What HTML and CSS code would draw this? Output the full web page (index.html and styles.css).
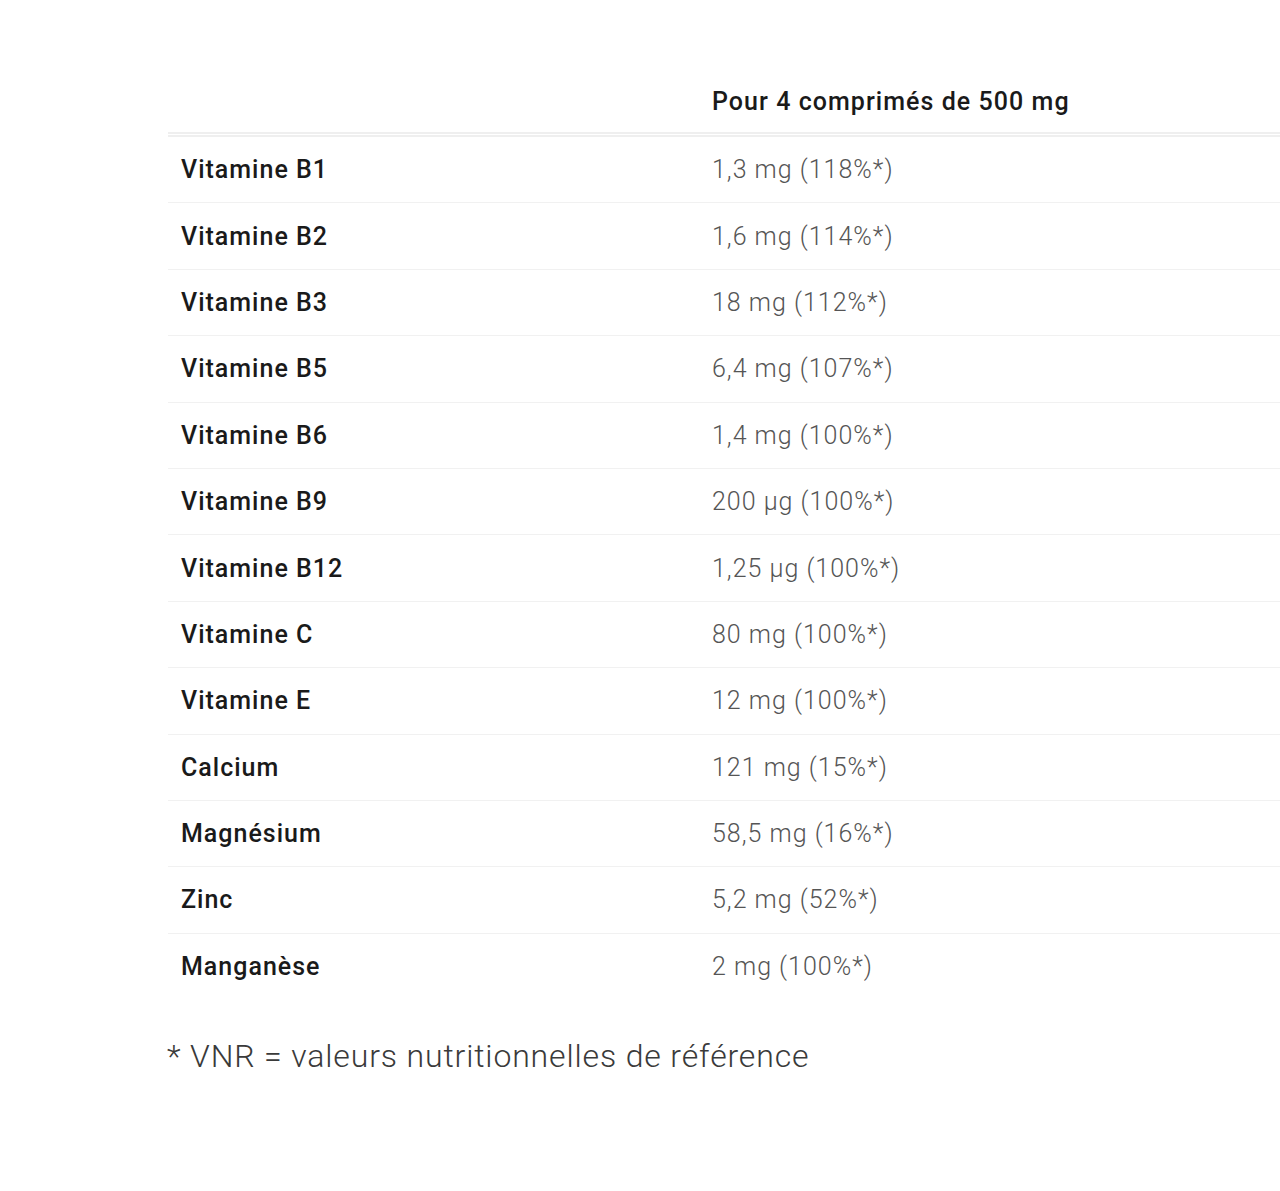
FILE: index.html
```html
<!DOCTYPE html>
<html lang="fr">
<head>
<meta charset="utf-8">
<link rel="stylesheet" href="styles.css">
</head>
<body>
<main class="page">
  <table class="nutri">
    <thead>
      <tr><th class="c1"></th><th class="c2">Pour 4 comprimés de 500 mg</th></tr>
    </thead>
    <tbody>
      <tr><td class="name">Vitamine B1</td><td class="val">1,3 mg (118%*)</td></tr>
      <tr><td class="name">Vitamine B2</td><td class="val">1,6 mg (114%*)</td></tr>
      <tr><td class="name">Vitamine B3</td><td class="val">18 mg (112%*)</td></tr>
      <tr><td class="name">Vitamine B5</td><td class="val">6,4 mg (107%*)</td></tr>
      <tr><td class="name">Vitamine B6</td><td class="val">1,4 mg (100%*)</td></tr>
      <tr><td class="name">Vitamine B9</td><td class="val">200 µg (100%*)</td></tr>
      <tr><td class="name">Vitamine B12</td><td class="val">1,25 µg (100%*)</td></tr>
      <tr><td class="name">Vitamine C</td><td class="val">80 mg (100%*)</td></tr>
      <tr><td class="name">Vitamine E</td><td class="val">12 mg (100%*)</td></tr>
      <tr><td class="name">Calcium</td><td class="val">121 mg (15%*)</td></tr>
      <tr><td class="name">Magnésium</td><td class="val">58,5 mg (16%*)</td></tr>
      <tr><td class="name">Zinc</td><td class="val">5,2 mg (52%*)</td></tr>
      <tr><td class="name">Manganèse</td><td class="val">2 mg (100%*)</td></tr>
    </tbody>
  </table>
  <p class="note">* VNR = valeurs nutritionnelles de référence</p>
</main>
</body>
</html>
```
FILE: styles.css
```css
html, body {
  margin: 0;
  padding: 0;
  background: #fff;
  overflow: hidden;
}
body {
  font-family: Roboto, "Liberation Sans", sans-serif;
}
.page {
  padding: 70px 0 0 168px;
}
.nutri {
  width: 1112px;
  border-collapse: collapse;
  table-layout: fixed;
}
.c1 { width: 505px; }
.nutri th {
  text-align: left;
  font-weight: 500;
  font-size: 25px;
  letter-spacing: 1.05px;
  color: #1a1a1a;
  padding: 0 13px;
  height: 62px;
  vertical-align: middle;
  border-bottom: 5px double #efefef;
}
.nutri td {
  height: 65.4px;
  padding: 0 13px;
  border-bottom: 1px solid #f1f1f1;
  font-size: 25px;
  letter-spacing: 1px;
  vertical-align: middle;
}
.nutri tr:last-child td {
  border-bottom: none;
}
.name {
  font-weight: 500;
  color: #1a1a1a;
}
.val {
  font-weight: 300;
  color: #555;
}
.note {
  margin: 38px 0 0 -1px;
  font-size: 32px;
  font-weight: 300;
  letter-spacing: 0.85px;
  color: #3a3a3a;
}
```
